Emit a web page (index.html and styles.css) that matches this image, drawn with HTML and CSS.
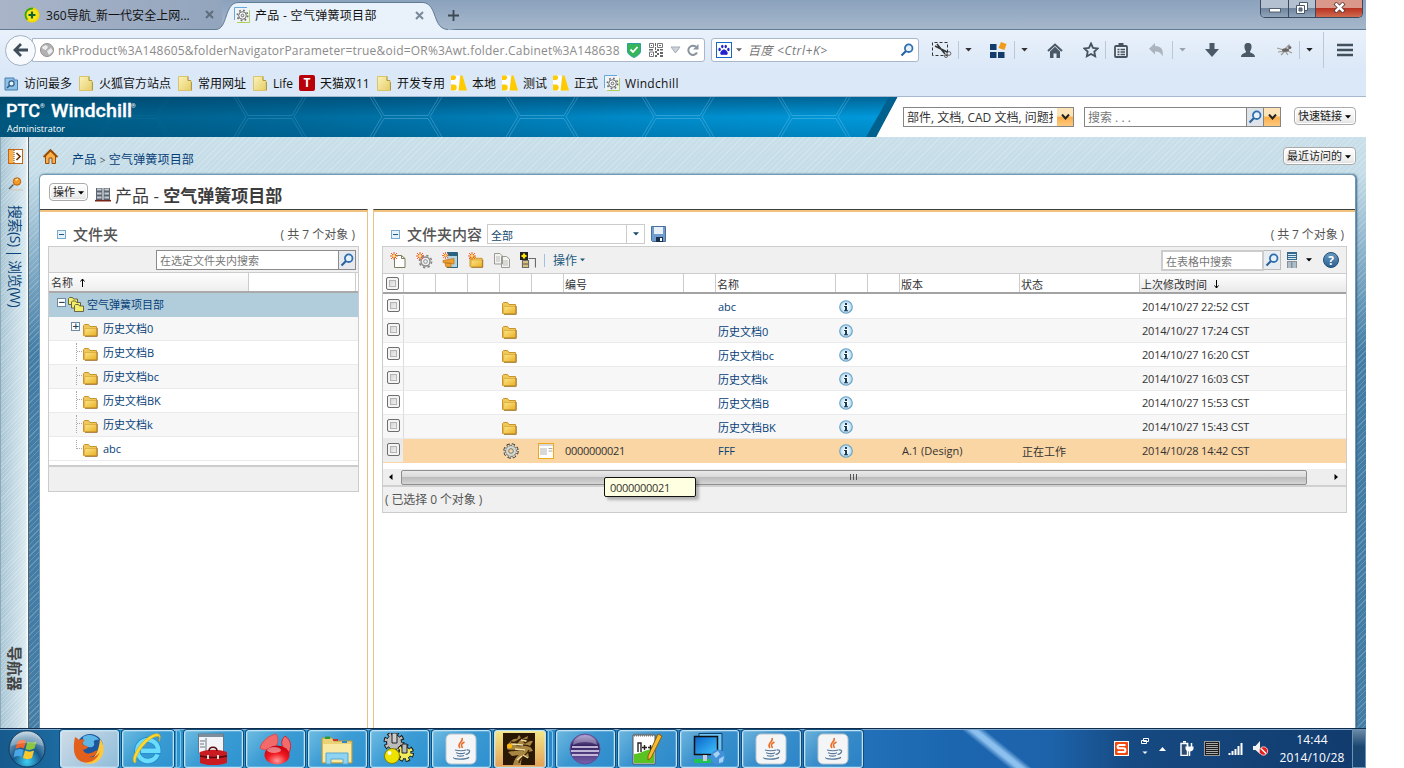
FILE: index.html
```html
<!DOCTYPE html>
<html lang="zh-CN">
<head>
<meta charset="utf-8">
<title>产品 - 空气弹簧项目部</title>
<link rel="stylesheet" href="styles.css">
</head>
<body>
<svg class="defs" width="0" height="0">
  <defs>
    <linearGradient id="gold" x1="0" y1="0" x2="1" y2="1"><stop offset="0" stop-color="#fde58c"/><stop offset="1" stop-color="#e8b020"/></linearGradient>
    <linearGradient id="pale" x1="0" y1="0" x2="1" y2="1"><stop offset="0" stop-color="#fbf3bb"/><stop offset="1" stop-color="#e6cd66"/></linearGradient>
    <radialGradient id="info"><stop offset="0.2" stop-color="#fff"/><stop offset="1" stop-color="#a8d4ee"/></radialGradient>
    <linearGradient id="help" x1="0" y1="0" x2="0" y2="1"><stop offset="0" stop-color="#6c9cc2"/><stop offset="1" stop-color="#2a5f92"/></linearGradient>
    <linearGradient id="banner" x1="0" y1="0" x2="1" y2="0"><stop offset="0" stop-color="#00587f"/><stop offset=".35" stop-color="#006c9e"/><stop offset=".7" stop-color="#008ac8"/><stop offset="1" stop-color="#009adc"/></linearGradient>
    <linearGradient id="shade" x1="0" y1="0" x2="0" y2="1"><stop offset="0" stop-color="#003c60" stop-opacity=".55"/><stop offset=".5" stop-color="#003c60" stop-opacity="0"/><stop offset="1" stop-color="#003c60" stop-opacity=".2"/></linearGradient>
    <radialGradient id="orb" cx=".5" cy=".85" r=".85"><stop offset="0" stop-color="#3fd0f5"/><stop offset=".45" stop-color="#17588c"/><stop offset=".8" stop-color="#6f9ab8"/><stop offset="1" stop-color="#c4d5e0"/></radialGradient>
    <radialGradient id="red" cx=".5" cy=".8" r=".8"><stop offset="0" stop-color="#ff9a9a"/><stop offset=".5" stop-color="#f01820"/><stop offset="1" stop-color="#c00010"/></radialGradient>
    <linearGradient id="purple" x1="0" y1="0" x2="0" y2="1"><stop offset="0" stop-color="#9a86c8"/><stop offset=".4" stop-color="#33215f"/><stop offset="1" stop-color="#7a62b0"/></linearGradient>
    <linearGradient id="scr" x1="0" y1="0" x2="1" y2="1"><stop offset="0" stop-color="#0a62c8"/><stop offset="1" stop-color="#3fc6ff"/></linearGradient>
  </defs>
  <symbol id="folder" viewBox="0 0 15 14"><path d="M.5 12.500V2.500L1.500 1.500h4L7 3.500h6.500V12.500Z" fill="#efc75a" stroke="#c8942c"/><path d="M2 5.500h11.800V12.800H1.200Z" fill="url(#gold)" stroke="#d9a634" stroke-width=".7"/><path d="M14.200 5v8.300H2" fill="none" stroke="#95641a" stroke-width=".9"/></symbol>
  <symbol id="bmfolder" viewBox="0 0 15 15"><path d="M.5.500h9.500v4h3v10h-12.500Z" fill="url(#pale)" stroke="#d9c36c"/><path d="M10 .5v4h3M13.500 6v8.500" fill="none" stroke="#b29a40"/></symbol>
  <symbol id="info-i" viewBox="0 0 14 14"><circle cx="7" cy="7" r="6.300" fill="url(#info)" stroke="#6aa0c2" stroke-width="1.100"/><path d="M6 3h2v2H6ZM5 6h3v4.300h1v1H5v-1h1V7H5Z" fill="#173c5c"/></symbol>
  <symbol id="gear" viewBox="0 0 16 16"><g fill="none" stroke="#888"><circle cx="8" cy="8" r="4.800" stroke-width="1.400"/><circle cx="8" cy="8" r="6.500" stroke-width="1.700" stroke-dasharray="2.550 2.550"/><circle cx="8" cy="8" r="2"/></g></symbol>
  <symbol id="wcgear" viewBox="0 0 16 16"><path d="M1 15V1h14v14Z" fill="#f2f3f5"/><path d="M.5 13V.5H13" fill="none" stroke="#62a9dd"/><path d="M15.500 3v12.500H3" fill="none" stroke="#a9d15a"/><g fill="none" stroke="#6b6b6b"><circle cx="8.500" cy="8.500" r="3.800"/><circle cx="8.500" cy="8.500" r="1.300"/><circle cx="8.500" cy="8.500" r="5.200" stroke-width="1.600" stroke-dasharray="1.700 2.380"/></g></symbol>
  <symbol id="lens" viewBox="0 0 14 14"><circle cx="8.700" cy="5.200" r="3.800" fill="#e6f1fa" stroke="#2f6fb0" stroke-width="1.800"/><path d="M6 8 1.500 12.500" stroke="#2d62a0" stroke-width="2.200"/></symbol>
  <symbol id="ba" viewBox="0 0 16 16"><path d="M0 .5h8.500v15H0Z" fill="#fff"/><path d="M7.500 15.500 9.500.5h2L16 15.500Z" fill="#ffcb00"/><path d="M0 .5h3.500c2 0 2.500 4-.5 4.500H0ZM0 9.500h3.500c3 .5 3 5.500 0 6H0Z" fill="#ffcb00"/></symbol>
  <symbol id="java" viewBox="0 0 32 32"><rect x="1" y="1" width="30" height="30" rx="5" fill="#f4f5f6" stroke="#b9c4cc"/><path d="M17 5c2 4-6 5-2 10M19.500 9c-4 2-3.500 3-2 6" fill="none" stroke="#e8702c" stroke-width="1.600"/><path d="M10 17c3 1 9 1 11 0M11 19.800c3 1 7 1 9 0M12 22.500c2 .8 5 .8 7 0M21.500 17c5-1 3.500 4-1 4.500M9 24.500c-2 1.800 12 2.500 15-.3" fill="none" stroke="#55789a" stroke-width="1.200"/></symbol>
  <symbol id="star" viewBox="0 0 8 8"><path d="M4 0v8M0 4h8M1 1l6 6M7 1 1 7" stroke="#ef5a28" stroke-width="1"/><circle cx="4" cy="4" r="1.400" fill="#ffe36a"/></symbol>
  <symbol id="caret" viewBox="0 0 8 5"><path d="M0 0h8L4 4.500Z"/></symbol>
</svg>

<div class="screen">
  <header class="titlebar">
    <div class="tab-back">
      <svg width="16" height="16" viewBox="0 0 16 16"><circle cx="8" cy="8" r="7.500" fill="#f5d800"/><path d="M.5 8a7.500 7.500 0 0 1 9-7.300L3 13.500A7.500 7.500 0 0 1 .5 8Z" fill="#35a51f"/><circle cx="8" cy="8" r="5.600" fill="#fbe51c"/><path d="M8 4.500v7M4.500 8h7" stroke="#12632a" stroke-width="2.200"/></svg>
      <span class="t1">360导航_新一代安全上网...</span>
      <svg class="x1" width="9" height="9" viewBox="0 0 9 9"><path d="M1 1l7 7M8 1 1 8" stroke="#5f6d7c" stroke-width="2"/></svg>
    </div>
    <div class="tab-front">
      <svg class="tabshape" width="234" height="30" viewBox="0 0 234 30"><path d="M-6 29.500C6 29 2 3 16 2.500H201C216 4 210 29 226 29.500L234 30H-6Z" fill="#e9f1fb"/><path d="M-6 29.500C6 29 2 3 16 2.500H201C216 4 210 29 226 29.500" fill="none" stroke="#607b94"/></svg>
      <svg width="16" height="16"><use href="#wcgear"/></svg>
      <span class="t2">产品 - 空气弹簧项目部</span>
      <svg class="x2" width="9" height="9" viewBox="0 0 9 9"><path d="M1 1l7 7M8 1 1 8" stroke="#7b8896" stroke-width="2"/></svg>
    </div>
    <svg class="plus" width="11" height="11" viewBox="0 0 11 11"><path d="M5.500 0v11M0 5.500h11" stroke="#3c4854" stroke-width="1.800"/></svg>
    <div class="winbtns">
      <span class="wb wmin"><svg width="12" height="5"><rect x=".5" y=".5" width="11" height="3.500" fill="#fff" stroke="#53606e"/></svg></span>
      <span class="wb wmax"><svg width="12" height="12" viewBox="0 0 12 12"><path d="M3.500.5h8v8h-8Z" fill="#fff" stroke="#4b586a"/><path d="M.5 3.500h8v8h-8Z" fill="#fff" stroke="#4b586a"/><path d="M3 6h3v3H3Z" fill="#6d7c92" stroke="#4b586a"/></svg></span>
      <span class="wb wclose"><svg width="13" height="11" viewBox="0 0 13 11"><path d="M2 1l9 9M11 1 2 10" stroke="#4c2b2b" stroke-width="4"/><path d="M2.500 1.500l8 8M10.500 1.500l-8 8" stroke="#fff" stroke-width="2.500"/></svg></span>
    </div>
  </header>

  <div class="navbar">
    <span class="back"><svg width="16" height="14" viewBox="0 0 16 14"><path d="M8 1 2 7l6 6M2.500 7H15" fill="none" stroke="#3f4d5b" stroke-width="2.800"/></svg></span>
    <div class="urlbar">
      <svg class="globe" width="14" height="14" viewBox="0 0 14 14"><circle cx="7" cy="7" r="6.500" fill="#b2b2b2" stroke="#929292"/><path d="M2 4l4-2 2 2-2 3-3-1ZM7 8l4-3 2 3-4 4Z" fill="#ededed"/></svg>
      <span class="url">nkProduct%3A148605&amp;folderNavigatorParameter=true&amp;oid=OR%3Awt.folder.Cabinet%3A148638</span>
      <svg width="14" height="15" viewBox="0 0 14 15"><path d="M.5.500h13V8c0 3-3 5-6.500 6.500C3.500 13 .5 11 .5 8Z" fill="#36b55c" stroke="#2da0a4"/><path d="M3.500 6.500 6 9l4.500-5" fill="none" stroke="#fff" stroke-width="1.800"/></svg>
      <svg class="qr" width="14" height="14" viewBox="0 0 14 14"><path d="M.5.5h4v4h-4ZM8.500.5h5v4h-5ZM.5 9h4v4.500h-4Z" fill="none" stroke="#777"/><path d="M2 2h1v1H2ZM10 2h2v1h-2ZM2 11h1v1H2ZM6 0h1v3H6ZM6 4h1v3H6ZM0 6h4v1.500H0ZM8 6h2v2H8ZM11 6h3v1.500h-3ZM6 8h2v2H6ZM8 10h2v2H8ZM11 9h3v2h-3ZM6 12h2v2H6ZM11 12h3v2h-3Z" fill="#666"/></svg>
      <svg class="tri" width="11" height="8" viewBox="0 0 11 8"><path d="M1 1h9L5.500 7Z" fill="#ccd2da" stroke="#a6adb6"/></svg>
      <svg width="12" height="12" viewBox="0 0 12 12"><path d="M10 8.500A4.600 4.600 0 1 1 9 2.800" fill="none" stroke="#8994a0" stroke-width="2"/><path d="M11.500 0v5.500H6Z" fill="#8994a0"/></svg>
    </div>
    <div class="searchbar">
      <svg width="16" height="16" viewBox="0 0 16 16"><rect x=".5" y=".5" width="15" height="15" fill="#fff" stroke="#1668c0"/><path d="M8 7.500c2 0 4 2.500 3.700 4.300-.5 1.700-2 1-3.700 1s-3.200.7-3.700-1C4 10 6 7.500 8 7.500Z" fill="#2222cf"/><ellipse cx="3.600" cy="7.500" rx="1.200" ry="1.700" fill="#2222cf"/><ellipse cx="12.400" cy="7.500" rx="1.200" ry="1.700" fill="#2222cf"/><ellipse cx="6.300" cy="4.500" rx="1.200" ry="1.800" fill="#2222cf"/><ellipse cx="9.700" cy="4.500" rx="1.200" ry="1.800" fill="#2222cf"/></svg>
      <svg class="c1" width="6" height="4"><use href="#caret" fill="#666"/></svg>
      <span class="hint">百度 &lt;Ctrl+K&gt;</span>
      <svg width="14" height="14"><use href="#lens"/></svg>
    </div>
    <div class="tools">
      <svg width="20" height="16" viewBox="0 0 20 16"><path d="M.5 13.500V.5h15v13Z" fill="none" stroke="#333" stroke-dasharray="3 2"/><path d="M3 4l13 6.500M5 2l8 10" stroke="#333" stroke-width="1.500"/><circle cx="17" cy="11.500" r="1.900" fill="none" stroke="#666"/><circle cx="14" cy="14" r="1.500" fill="none" stroke="#666"/></svg>
      <i class="sep s1"></i><svg class="dd" width="7" height="4"><use href="#caret" fill="#333"/></svg>
      <svg class="tiles" width="17" height="16" viewBox="0 0 17 16"><path d="M0 2h6.500v6H0ZM0 10h6.500v6H0ZM8 10h6.500v6H8Z" fill="#123a6b"/><path d="M11 0l5.500 2-2 6-6-2Z" fill="#f39a16"/></svg>
      <i class="sep s2"></i><svg class="dd" width="7" height="4"><use href="#caret" fill="#333"/></svg>
      <svg class="home" width="16" height="15" viewBox="0 0 16 15"><path d="M1 8 8 1.500 15 8" fill="none" stroke="#4b5866" stroke-width="2"/><path d="M3 8.500l5-4.700 5 4.700V15H9.500v-4.500h-3V15H3Z" fill="#4b5866"/></svg>
      <svg class="fav" width="16" height="16" viewBox="0 0 16 16"><path d="M8 1.500l2 4.300 4.700.6-3.400 3.200.9 4.700L8 12l-4.200 2.300.9-4.700L1.300 6.400 6 5.800Z" fill="none" stroke="#45525f" stroke-width="1.800"/></svg>
      <i class="sep s3"></i>
      <svg class="clip" width="14" height="15" viewBox="0 0 14 15"><rect x="1" y="3" width="12" height="11" rx="1" fill="#e8eff7" stroke="#45525f" stroke-width="1.800"/><path d="M4.500 0h5v3h-5Z" fill="#45525f"/><path d="M3.500 6.500h2M6.500 6.500h4.500M3.500 9h2M6.500 9h4.500M3.500 11.500h2M6.500 11.500h4.500" stroke="#45525f" stroke-width="1.300"/></svg>
      <svg class="undo" width="15" height="14" viewBox="0 0 15 14"><path d="M6 0v3c6 0 9 4 7.500 10.500C12 9.500 9.500 8.500 6 8.500v3L0 5.800Z" fill="#abb3be"/></svg>
      <i class="sep s4"></i><svg class="dd4" width="7" height="4"><use href="#caret" fill="#98a3ae"/></svg>
      <svg class="down" width="14" height="14" viewBox="0 0 14 14"><path d="M4.500 0h5v6H14l-7 8-7-8h4.500Z" fill="#4b5866"/></svg>
      <svg class="user" width="14" height="14" viewBox="0 0 14 14"><path d="M7 0c3 0 3.800 2 3.500 4.500C10.200 7 9.500 7.500 9 8.500c0 2 5 1.500 5 5.500H0c0-4 5-3.500 5-5.500C4.500 7.500 3.800 7 3.500 4.500 3.200 2 4 0 7 0Z" fill="#4b5866"/></svg>
      <svg class="fly" width="16" height="12" viewBox="0 0 16 12"><path d="M0 4l7 2 5-5 1 3-4 3-8 1M4 11l4-4 3 4M9 6l6 3" fill="none" stroke="#9a9a98" stroke-width="1.200"/><ellipse cx="8.500" cy="6" rx="3.500" ry="1.800" fill="#6a655e"/><circle cx="12.800" cy="3.500" r="1.600" fill="#6b6b6b"/></svg>
      <i class="sep s5"></i><svg class="dd" width="7" height="4"><use href="#caret" fill="#222"/></svg>
      <i class="sep tall"></i>
      <svg class="menu" width="16" height="14"><path d="M0 2h16M0 7h16M0 12h16" stroke="#43515e" stroke-width="2.600"/></svg>
    </div>
  </div>

  <nav class="bookmarks">
    <span style="width:75px"><svg width="15" height="15" viewBox="0 0 15 15"><path d="M1 2h9v2h3.500v10H1Z" fill="#8fc0e6" stroke="#477fb0"/><circle cx="7.500" cy="7.500" r="2.600" fill="#e6f3fc" stroke="#2e5c88" stroke-width="1.200"/><path d="M5.500 9.500 3 12" stroke="#2e5c88" stroke-width="1.600"/></svg>访问最多</span>
    <span style="width:99px"><svg width="15" height="15"><use href="#bmfolder"/></svg>火狐官方站点</span>
    <span style="width:75px"><svg width="15" height="15"><use href="#bmfolder"/></svg>常用网址</span>
    <span style="width:46px"><svg width="15" height="15"><use href="#bmfolder"/></svg>Life</span>
    <span style="width:78px"><i class="tmall">T</i>天猫双11</span>
    <span style="width:74px"><svg width="15" height="15"><use href="#bmfolder"/></svg>开发专用</span>
    <span style="width:51px"><svg width="16" height="16"><use href="#ba"/></svg>本地</span>
    <span style="width:51px"><svg width="16" height="16"><use href="#ba"/></svg>测试</span>
    <span style="width:51px"><svg width="16" height="16"><use href="#ba"/></svg>正式</span>
    <span class="wc"><svg width="16" height="16"><use href="#wcgear"/></svg>Windchill</span>
  </nav>

  <div class="banner">
    <svg class="bannerart" width="900" height="40" viewBox="0 0 900 40">
      <path d="M0 0H897L876 40H0Z" fill="url(#banner)"/><path d="M0 0H897L876 40H0Z" fill="url(#shade)"/>
      <path d="M889 0h8.500L876 40H866Z" fill="#00618f"/>
      <g fill="none" stroke="#9adcff" stroke-opacity=".32" stroke-width=".9">
        <path id="hex" d="M370 0l12 19.500L370 40M373 0l11 18.500h44L439 0M373 40l11-18.500h44L439 40M442 0l-12 19.500L442 40"/>
        <use href="#hex" x="136"/><use href="#hex" x="272"/><use href="#hex" x="408"/><use href="#hex" x="-136" opacity=".6"/><use href="#hex" x="-272" opacity=".15"/>
      </g>
      <g fill="#fff" font-family="Roboto, sans-serif"><text x="6" y="20" font-size="19" font-weight="500" textLength="34" lengthAdjust="spacingAndGlyphs" stroke="#fff" stroke-width=".3">PTC</text><text x="40" y="11" font-size="6">®</text><text x="51" y="20" font-size="19" font-weight="500" textLength="81" lengthAdjust="spacingAndGlyphs" stroke="#fff" stroke-width=".3">Windchill</text><text x="131" y="11" font-size="6">®</text></g>
      <text class="admin" x="7" y="35" textLength="58">Administrator</text>
    </svg>
    <div class="combo types"><span>部件, 文档, CAD 文档, 问题报告</span><b class="arrow"><svg width="9" height="6" viewBox="0 0 9 6"><path d="M1 .5l3.500 4L8 .5" fill="none" stroke="#222" stroke-width="2"/></svg></b></div>
    <div class="combo find"><span>搜索 . . .</span><b class="lensbox"><svg width="14" height="14"><use href="#lens"/></svg></b><b class="arrow"><svg width="9" height="6" viewBox="0 0 9 6"><path d="M1 .5l3.500 4L8 .5" fill="none" stroke="#222" stroke-width="2"/></svg></b></div>
    <button class="btn quick">快速链接<svg width="6" height="4"><use href="#caret"/></svg></button>
  </div>

  <main class="stage">
    <aside class="rail">
      <svg class="expand" width="15" height="15" viewBox="0 0 15 15"><rect x=".5" y=".5" width="14" height="14" fill="#fff" stroke="#c26614"/><path d="M1 1h4.500v13H1Z" fill="#f9b04e"/><path d="M6 1v13" stroke="#7a3a00" stroke-dasharray="1 1"/><path d="M8.500 4l3.500 3.500L8.500 11" fill="none" stroke="#663300" stroke-width="1.600"/></svg>
      <svg class="pin" width="16" height="14" viewBox="0 0 16 14"><path d="M3 13h12" stroke="#d6c3b0"/><path d="M5.500 7.500 1 12" stroke="#58616a" stroke-width="1.500"/><circle cx="9" cy="4.500" r="3.700" fill="#f49a24" stroke="#bd6008"/><path d="M7.500 3l2.500-.8" stroke="#ffe0a0" stroke-width="1.500"/></svg>
      <span class="vlink">搜索(S) | 浏览(W)</span>
      <span class="vtitle">导航器</span>
    </aside>
    <section class="content">
      <div class="crumbs">
        <svg width="15" height="15" viewBox="0 0 15 15"><path d="M2.500 7V14.500h3.500V9h3v5.500h3.500V7L7.500 2Z" fill="#f9b04a" stroke="#9a4c08"/><path d="M.5 8 7.500 1l7 7" fill="none" stroke="#9a4c08" stroke-width="1.800"/></svg>
        <span class="trail">产品 <em>&gt;</em> 空气弹簧项目部</span>
        <button class="btn">最近访问的<svg width="6" height="4"><use href="#caret"/></svg></button>
      </div>
      <div class="card">
        <div class="cardhead">
          <button class="btn">操作<svg width="6" height="4"><use href="#caret"/></svg></button>
          <svg class="shelf" width="16" height="14" viewBox="0 0 16 14"><path d="M1 0h6.500v12H1ZM8.500 0H15v12H8.500Z" fill="#5b6470"/><path d="M2 1.500h4.500M2 5.500h4.500M2 9.500h4.500M9.500 1.500H14M9.500 5.500H14M9.500 9.500H14" stroke="#c3cad2" stroke-width="2"/><path d="M0 12.700h16" stroke="#7a2418" stroke-width="1.600"/></svg>
          <h1>产品 - <b>空气弹簧项目部</b></h1>
        </div>
        <div class="panes">
          <section class="pane left">
            <div class="panehead"><i class="mini"></i><h2>文件夹</h2><span class="count">( 共 7 个对象 )</span></div>
            <div class="tree">
              <div class="treebar"><div class="tsearch">在选定文件夹内搜索</div><b class="tlens"><svg width="14" height="14"><use href="#lens"/></svg></b></div>
              <div class="treecols"><span>名称<svg class="sort" width="5" height="9" viewBox="0 0 5 9"><path d="M2.500 1v8M.5 3.500 2.500 1l2 2.500" fill="none" stroke="#000"/></svg></span><span></span><span></span></div>
              <div class="trow root"><i class="box">−</i><svg class="stack" width="16" height="15" viewBox="0 0 16 15"><g fill="#f5ee6a" stroke="#5a5a3a" stroke-width=".9"><path d="M.5 7.500V1.500l1-1h3l1 1.500h4v5.500Z"/><path d="M3.500 11V5l1-1h3l1 1.500h4V11Z"/><path d="M6.500 14.500v-6l1-1h3l1 1.500h4v5.500Z"/></g></svg><span>空气弹簧项目部</span></div>
              <div class="trow alt"><i class="box kid">+</i><svg width="15" height="14"><use href="#folder"/></svg><span>历史文档0</span></div>
              <div class="trow"><i class="dots"></i><svg width="15" height="14"><use href="#folder"/></svg><span>历史文档B</span></div>
              <div class="trow alt"><i class="dots"></i><svg width="15" height="14"><use href="#folder"/></svg><span>历史文档bc</span></div>
              <div class="trow"><i class="dots"></i><svg width="15" height="14"><use href="#folder"/></svg><span>历史文档BK</span></div>
              <div class="trow alt"><i class="dots"></i><svg width="15" height="14"><use href="#folder"/></svg><span>历史文档k</span></div>
              <div class="trow"><i class="dots last"></i><svg width="15" height="14"><use href="#folder"/></svg><span>abc</span></div>
              <div class="treefoot"></div>
            </div>
          </section>
          <section class="pane right">
            <div class="panehead"><i class="mini"></i><h2>文件夹内容</h2>
              <div class="view"><span>全部</span><b><svg width="6" height="4"><use href="#caret" fill="#1c4a66"/></svg></b></div>
              <svg width="15" height="16" viewBox="0 0 15 16"><path d="M.5.5h14v15H1.500l-1-1Z" fill="#6f9ccc" stroke="#4a6f9c"/><path d="M3 1h9v7H3Z" fill="#e9f1f8"/><path d="M5 11h7v5H5Z" fill="#18304f"/><path d="M9 12h2v3H9Z" fill="#fff"/></svg>
              <span class="count">( 共 7 个对象 )</span></div>
            <div class="grid">
              <div class="gbar">
                <svg class="a1" width="16" height="16" viewBox="0 0 16 16"><path d="M4.500 3.500h7l3.500 3V15.500H4.500Z" fill="#fff" stroke="#7c7f55"/><path d="M11.500 3.500v3H15" fill="none" stroke="#7c7f55"/><use href="#star" width="8" height="8"/></svg>
                <svg class="a2" width="17" height="17" viewBox="0 0 17 17"><use href="#gear" x="2" y="2" width="15" height="15"/><use href="#star" width="8" height="8"/></svg>
                <svg class="a3" width="16" height="16" viewBox="0 0 16 16"><path d="M5 .5h10.500v15H5" fill="#b5d2e0" stroke="#28627f"/><path d="M6 1h9v3H6Z" fill="#28627f"/><path d="M1 8.500l11-2v5.500L1 10.500ZM3 11h6v4H4Z" fill="#f0a030" stroke="#c07a20" stroke-width=".8"/><use href="#star" width="7" height="7"/></svg>
                <svg class="a4" width="16" height="16" viewBox="0 0 16 16"><use href="#folder" x="1" y="3" width="15" height="13"/><use href="#star" width="8" height="8"/></svg>
                <svg class="a5" width="16" height="15" viewBox="0 0 16 15"><path d="M.5.500h5.500l2.500 2.500v8H.5ZM7.500 3.500h5l3 2.500v8.500h-8Z" fill="#f4f4f0" stroke="#9a9a92"/><path d="M2 4h4M2 6h4M2 8h4M9 8h5M9 10h5M9 12h5" stroke="#bbb"/></svg>
                <svg class="a6" width="16" height="16" viewBox="0 0 16 16"><path d="M0 0h8v8H0Z" fill="#222"/><path d="M4 1.500v5M1.500 4h5" stroke="#ffe700" stroke-width="2.200"/><path d="M8.500 6.500h7v9M2.500 8.500h6v7h-6Z" fill="none" stroke="#6b6b6b" stroke-width="1.200"/><path d="M3 9h5v6H3Z" fill="#d9c07a"/><path d="M3 12h5" stroke="#555"/></svg>
                <i class="bar"></i><span class="act">操作</span><svg class="actdd" width="5" height="4"><use href="#caret" fill="#1c5a7c"/></svg>
                <div class="gsearch">在表格中搜索</div><b class="glens"><svg width="14" height="14"><use href="#lens"/></svg></b>
                <svg class="layout" width="10" height="16" viewBox="0 0 10 16"><path d="M0 0h10v8H0Z" fill="#35698d"/><path d="M1 2.500h8M1 4.500h8M1 6.500h8" stroke="#d8ecf7"/><path d="M0 9h10v7H0Z" fill="#8a8f9a"/><path d="M1 11h3M5.500 11H9M1 13h3M5.500 13H9M1 15h3M5.500 15H9" stroke="#cdeefa"/></svg>
                <svg class="ldd" width="6" height="4"><use href="#caret"/></svg>
                <svg width="16" height="16" viewBox="0 0 16 16"><circle cx="8" cy="8" r="7.500" fill="url(#help)" stroke="#244e77"/><text x="8" y="12.500" text-anchor="middle" fill="#fff" font-family="Open Sans" font-size="12" font-weight="700">?</text></svg>
              </div>
              <div class="gcols"><span><i class="check"></i></span><span></span><span></span><span></span><span></span><span></span><span>编号</span><span></span><span>名称</span><span></span><span></span><span>版本</span><span>状态</span><span class="sorted">上次修改时间<svg class="sort" width="5" height="9" viewBox="0 0 5 9"><path d="M2.500 0v8M.5 5.500l2 2.500 2-2.500" fill="none" stroke="#000"/></svg></span></div>
              <div class="grow"><i class="check"></i><svg class="ci" width="15" height="14"><use href="#folder"/></svg><span class="cn">abc</span><svg class="cf" width="14" height="14"><use href="#info-i"/></svg><span class="cd">2014/10/27 22:52 CST</span></div>
              <div class="grow alt"><i class="check"></i><svg class="ci" width="15" height="14"><use href="#folder"/></svg><span class="cn">历史文档0</span><svg class="cf" width="14" height="14"><use href="#info-i"/></svg><span class="cd">2014/10/27 17:24 CST</span></div>
              <div class="grow"><i class="check"></i><svg class="ci" width="15" height="14"><use href="#folder"/></svg><span class="cn">历史文档bc</span><svg class="cf" width="14" height="14"><use href="#info-i"/></svg><span class="cd">2014/10/27 16:20 CST</span></div>
              <div class="grow alt"><i class="check"></i><svg class="ci" width="15" height="14"><use href="#folder"/></svg><span class="cn">历史文档k</span><svg class="cf" width="14" height="14"><use href="#info-i"/></svg><span class="cd">2014/10/27 16:03 CST</span></div>
              <div class="grow"><i class="check"></i><svg class="ci" width="15" height="14"><use href="#folder"/></svg><span class="cn">历史文档B</span><svg class="cf" width="14" height="14"><use href="#info-i"/></svg><span class="cd">2014/10/27 15:53 CST</span></div>
              <div class="grow alt"><i class="check"></i><svg class="ci" width="15" height="14"><use href="#folder"/></svg><span class="cn">历史文档BK</span><svg class="cf" width="14" height="14"><use href="#info-i"/></svg><span class="cd">2014/10/27 15:43 CST</span></div>
              <div class="grow hot"><i class="check"></i>
                <svg class="ci part" width="16" height="16" viewBox="0 0 16 16"><circle cx="8" cy="8" r="6.300" fill="none" stroke="#333" stroke-width="2.800" stroke-dasharray="2.900 2.050"/><circle cx="8" cy="8" r="5.500" fill="#d5d9cc" stroke="#555" stroke-width=".7"/><circle cx="8" cy="8" r="6" fill="none" stroke="#d5d9cc" stroke-width="1.700" stroke-dasharray="1.900 2.810" stroke-dashoffset="-.4"/><circle cx="8" cy="8" r="2.300" fill="#fad6a4" stroke="#777"/></svg>
                <svg class="cm" width="16" height="16" viewBox="0 0 16 16"><rect x=".5" y=".5" width="15" height="15" fill="#fff" stroke="#f0a818"/><path d="M1 1h14v2H1Z" fill="#d5d9de"/><path d="M2 5h7v7H2Z" fill="#d8d8d8"/><path d="M10.500 5.500h4M10.500 8h4" stroke="#aaa"/></svg>
                <span class="cnum">0000000021</span><span class="cn">FFF</span><svg class="cf" width="14" height="14"><use href="#info-i"/></svg><span class="cv">A.1 (Design)</span><span class="cs">正在工作</span><span class="cd">2014/10/28 14:42 CST</span></div>
              <div class="hscroll"><svg width="5" height="8"><path d="M4.500 1v6L1 4Z"/></svg><div class="thumb"><svg width="8" height="6"><path d="M.5 0v6M3.500 0v6M6.500 0v6" stroke="#555"/></svg></div><svg class="endarrow" width="5" height="8"><path d="M.5 1v6L4 4Z"/></svg></div>
              <div class="gfoot">( 已选择 0 个对象 )</div>
              <div class="tooltip">0000000021</div>
            </div>
          </section>
        </div>
      </div>
    </section>
  </main>

  <footer class="taskbar">
    <div class="start"><svg width="40" height="38" viewBox="0 0 40 38"><circle cx="20" cy="19" r="18" fill="url(#orb)" stroke="#12395c"/><path d="M10.500 11.500c4-2.500 6-2 8.500-.5l-2 7.500c-3-1.500-5-1.500-8.500.5Z" fill="#f0642c"/><path d="M20.500 11.500c3 1.500 6 1.500 9-.5l-2 7.500c-3 1.500-6 2-9 .5Z" fill="#8cc540"/><path d="M8 20.500c4-2 6-2 8.500-.5l-2 7c-3-1.500-5-1.500-8 .5Z" fill="#4aa6e6"/><path d="M18 20.500c3 1.500 6 1.500 9 0l-2 7.500c-3 1.500-6 1.500-9 0Z" fill="#fbc82c"/><path d="M4 16a16 15 0 0 1 32 0c-10-4-22-4-32 0Z" fill="#fff" opacity=".25"/></svg></div>
    <div class="task on"><svg width="32" height="32" viewBox="0 0 32 32"><circle cx="17" cy="14" r="13" fill="#1b579f"/><path d="M10 4c6-4 14-1 16 3-4-1-6 1-5 3 1 3-2 5-5 4-4 0-5-2-6-3Z" fill="#5cb6e6"/><path d="M27 6c5 6 5 16-1 21-5 5-12 4-15 3 9-2 15-10 16-24Z" fill="#ffc83c"/><path d="M2 4c2 1 3 2 4 3 2-1 4-1 6 0-2 2-3 3-2 5 2 1 4 0 5 2-2 3-4 2-5 3 2 5 8 4 12 1 2 0 2-1 3-2-1 5-4 8-9 8 4 1 8-1 11-5-3 8-10 12-17 10C2 27-1 19 2 4Z" fill="#e2601b"/></svg></div>
    <div class="task ie"><svg width="32" height="32" viewBox="0 0 32 32"><path d="M26.500 21.500A10.500 10.500 0 1 1 27.300 17.800H10" fill="none" stroke="#1f8fd0" stroke-width="6"/><path d="M26.500 21.500A10.500 10.500 0 1 1 27.300 17.800H10" fill="none" stroke="#6bdcfb" stroke-width="4.400"/><path d="M4 30C-3 27 12 3 25 .8c5-.8 5 4 3 7.700 1.500-5 0-6-3-5C15 6 3 24 5 29Z" fill="#ffd92e" stroke="#e0a810" stroke-width=".6"/></svg></div><i class="pile"></i>
    <div class="task"><svg width="32" height="32" viewBox="0 0 32 32"><path d="M1.500 1h25v19h-25Z" fill="#f2f4f7" stroke="#697886"/><path d="M2 1h24v3H2Z" fill="#7e8d9c"/><path d="M3 8h5M3 11h4M3 14h5M9 5v14" stroke="#6a7680"/><path d="M3 19c8-3 18-3 27 0v11c-9 3-19 3-27 0Z" fill="#c91b20"/><path d="M3 23c9 2 18 2 27 0M12 18c0-5 8-5 8 0" fill="none" stroke="#5b0a0e" stroke-width="1.500"/><path d="M10 22h2v4h-2ZM20 22h2v4h-2Z" fill="#ddd"/></svg></div>
    <div class="task"><svg width="32" height="32" viewBox="0 0 32 32"><path d="M1 15C3 8 9 3 17 1c3 5 2 9 0 12-5 4-12 5-16 2Z" fill="#f26a6a" stroke="#e04a4a"/><path d="M23 12c-1-4 1-7 3-9 6 4 7 10 4 17-2-1-6-4-7-8Z" fill="#f36c6c" stroke="#d8232c"/><ellipse cx="18" cy="22" rx="12.500" ry="9.500" fill="url(#red)"/><ellipse cx="15" cy="17" rx="7" ry="3" fill="#fff" opacity=".45"/></svg></div>
    <div class="task"><svg width="32" height="32" viewBox="0 0 32 32"><path d="M1 5h10l2 3h18v22H1Z" fill="#ecd277" stroke="#b99a38"/><path d="M4 3.500h5v2.500H4Z" fill="#2f9a3a"/><path d="M12 6h5v2h-5Z" fill="#c33"/><path d="M21 8h5v2h-5Z" fill="#2a8acb"/><path d="M2 11h28v18H2Z" fill="#f8e9a4"/><path d="M5 31V20h22v11h-5v-5H10v5Z" fill="#8cd4f2" stroke="#5aa9cf"/></svg></div>
    <div class="task"><svg width="32" height="32" viewBox="0 0 32 32"><circle cx="11" cy="9" r="8" fill="none" stroke="#111" stroke-width="5" stroke-dasharray="4 2.280"/><circle cx="11" cy="9" r="7.500" fill="#bcbcbc" stroke="#111" stroke-width="1"/><circle cx="11" cy="9" r="8" fill="none" stroke="#bcbcbc" stroke-width="3" stroke-dasharray="2.600 3.680" stroke-dashoffset="-.7"/><path d="M9 0h5v10H9Z" fill="#ccc" stroke="#222"/><circle cx="22" cy="20" r="6.500" fill="none" stroke="#111" stroke-width="5" stroke-dasharray="3.600 2.200"/><circle cx="22" cy="20" r="6" fill="#f2ec5c" stroke="#111"/><circle cx="22" cy="20" r="6.500" fill="none" stroke="#f2ec5c" stroke-width="3" stroke-dasharray="2.400 3.400" stroke-dashoffset="-.6"/><path d="M19 11h5v9h-5Z" fill="#bbb" stroke="#222"/><circle cx="9" cy="23" r="7.500" fill="#eee200" stroke="#8a8000"/><circle cx="6.500" cy="20" r="2" fill="#fff"/></svg></div>
    <div class="task"><svg width="32" height="32"><use href="#java"/></svg></div>
    <div class="task gold"><svg width="32" height="32" viewBox="0 0 32 32"><path d="M0 0h32v32H0Z" fill="#2a1704"/><path d="M4 12c3-2 5-7 10-6l2-4 3 4 6-3-1 5 6 0-3 5 3 5-5 1 1 6-4-2c-3 1-4 4-4 9h-8c1-5 3-8 6-10l-7 1-4-4 4-1-5-2Z" fill="#a98542"/><path d="M5 13c4-4 6-2 9-5 4-4 8 0 12-2M6 17c6 2 10-2 15 1M13 12c5 2 8-2 15 2M16 30c1-7 8-7 10-13M8 9l6 1 4-5 4 5 6-3" fill="none" stroke="#3a2206" stroke-width="1.300"/><path d="M8 11l12 1M12 16l10 1M20 22l5 3M18 7l5 1M14 27l5-4" stroke="#f1dfa4" stroke-width="1.400"/><circle cx="6.500" cy="13" r="2.500" fill="#ffb800"/></svg></div><i class="pile"></i>
    <div class="task"><svg width="32" height="32" viewBox="0 0 32 32"><circle cx="16" cy="16" r="15" fill="url(#purple)" stroke="#5f4d95"/><path d="M3 14h26M2 18h28M3 22h26" stroke="#e6e0f5" stroke-width="1.500"/><path d="M4 12a12 10 0 0 1 24 0c-7-4-17-4-24 0Z" fill="#fff" opacity=".3"/></svg></div>
    <div class="task"><svg width="32" height="32" viewBox="0 0 32 32"><path d="M2 2h22v29H2Z" fill="#fff" stroke="#555"/><path d="M3 21c6 0 12-5 20-5v14H3Z" fill="#58c322"/><path d="M3 2h20" stroke="#777" stroke-width="3" stroke-dasharray="1 1"/><path d="M7 19v-9h3v9M13.500 12v5M11 14.500h5M19.500 12v5M17 14.500h5" fill="none" stroke="#222" stroke-width="1.400"/><path d="M27 1l4 2-11 22-3 2v-4Z" fill="#f5bc30" stroke="#8a5a10"/></svg></div>
    <div class="task"><svg width="32" height="32" viewBox="0 0 32 32"><path d="M6 .5h23v17H6Z" fill="#6dc4f5" stroke="#12406e"/><path d="M1.500 3.500h23v18h-23Z" fill="url(#scr)" stroke="#111" stroke-width="1.500"/><path d="M1 28h17" stroke="#23c353" stroke-width="4"/><path d="M12 22v6" stroke="#ccd" stroke-width="4"/><circle cx="25" cy="24" r="7.500" fill="#4391d8"/><path d="M20 21l5-3 2 3-4 4ZM26 26l5-3-1 6-4 1Z" fill="#a5d2f5"/></svg></div>
    <div class="task"><svg width="32" height="32"><use href="#java"/></svg></div>
    <div class="task"><svg width="32" height="32"><use href="#java"/></svg></div>
    <div class="tray">
      <svg width="15" height="15" viewBox="0 0 15 15"><rect width="15" height="15" fill="#fff"/><rect x="1" y="1" width="13" height="13" rx="1" fill="#ef4a10"/><path d="M11.500 4H5.500C3 4 3 7.300 5.500 7.300h4c2.500 0 2.500 3.700 0 3.700h-6" fill="none" stroke="#fff" stroke-width="2"/></svg>
      <svg class="lang" width="8" height="17" viewBox="0 0 8 17"><path d="M2.500.5h5v3h-5ZM.5 2.500h5v3h-5Z" fill="#0f3c70" stroke="#fff"/><path d="M1.500 13.500h5L4 16Z" fill="#fff"/></svg>
      <svg class="up" width="7" height="4"><path d="M0 4h7L3.500 0Z" fill="#fff"/></svg>
      <svg class="plug" width="14" height="15" viewBox="0 0 14 15"><path d="M1 2.500h6.500v12H1ZM3 .8h3" fill="#2b4a70" stroke="#fff" stroke-width="1.400"/><path d="M5.500 5.500h8v2c0 2-2 3-4 3s-4-1-4-3Z" fill="#fff"/><path d="M7.500 2v4M11.500 2v4M9.500 10v5" stroke="#fff" stroke-width="1.500"/></svg>
      <svg class="grill" width="16" height="15" viewBox="0 0 16 15"><rect x=".5" y=".5" width="15" height="14" fill="#1c1c1c" stroke="#999"/><path d="M2 2.500h12M2 4.500h12M2 6.500h12M2 8.500h12M2 10.500h12M2 12.500h12" stroke="#aaa"/></svg>
      <svg class="signal" width="16" height="12"><path d="M1.500 12v-2M4.500 12V8M7.500 12V6M10.500 12V3M13.500 12V0" stroke="#fff" stroke-width="2"/></svg>
      <svg class="mute" width="16" height="15" viewBox="0 0 16 15"><path d="M0 5h2.500L7 0v13L2.500 9H0Z" fill="#f2f2f2"/><circle cx="10.500" cy="10" r="4.200" fill="#e42020" stroke="#f7b6b6"/><path d="M8 7.500l5 5" stroke="#fff" stroke-width="1.400"/></svg>
      <div class="clock"><span>14:44</span><span>2014/10/28</span></div>
      <i class="peek"></i>
    </div>
  </footer>
</div>
</body>
</html>
```
FILE: styles.css
```css
* { box-sizing: border-box; }
body { margin: 0; background: #fff; font-family: "Open Sans", "Noto Sans CJK SC", sans-serif; font-size: 11px; color: #333; }
svg { flex: none; display: block; }
i { font-style: normal; }
.defs { position: absolute; }
.screen { width: 1366px; height: 768px; display: flex; flex-direction: column; overflow: hidden; white-space: nowrap; }

/* browser title bar */
.titlebar { height: 30px; display: flex; background: linear-gradient(#8ba2bd, #a5b7cb); border-bottom: 1px solid #607b94; font-size: 12px; color: #111; }
.tab-back { width: 222px; padding-left: 24px; display: flex; align-items: center; height: 30px; background: linear-gradient(90deg, #a9b4c8, #92a5bd); border-bottom: 1px solid #607b94; }
.t1 { margin-left: 6px; width: 148px; letter-spacing: .03px; }
.x1 { margin-left: 11px; }
.tab-front { width: 220px; height: 30px; display: grid; grid-template-columns: 12px 16px 5px 160px 1fr; align-items: center; }
.tab-front > svg:nth-child(2) { grid-column: 2; grid-row: 1; }
.tabshape { grid-area: 1 / 1 / 2 / 6; overflow: visible; }
.t2 { grid-column: 4; grid-row: 1; letter-spacing: .3px; }
.x2 { grid-column: 5; grid-row: 1; }
.plus { margin: 10px 0 0 6px; }
.winbtns { margin-left: auto; margin-right: 3px; display: flex; width: 103px; height: 18px; border: 1px solid #3b4a5d; border-top: 0; border-radius: 0 0 5px 5px; overflow: hidden; }
.wb { display: flex; justify-content: center; align-items: center; background: linear-gradient(#b3c0d0 45%, #71859e 50%, #8fa3bb); border-right: 1px solid #3b4a5d; }
.wmin { width: 28px; padding-top: 4px; }
.wmax { width: 27px; padding-bottom: 2px; }
.wclose { flex: 1; padding-bottom: 2px; background: linear-gradient(#d99889 45%, #b93322 50%, #cf6b50); border: 0; }

/* navigation */
.navbar { height: 40px; padding-left: 5px; display: flex; align-items: center; background: linear-gradient(#e9f1fb, #dbe8f7); }
.back { width: 31px; height: 31px; border: 1px solid #a3b1c2; border-radius: 50%; background: #f7fafd; display: grid; place-items: center; z-index: 1; }
.urlbar { margin-left: -4px; width: 673px; height: 24px; background: #fff; border: 1px solid #a9b7ca; border-radius: 0 3px 3px 0; display: flex; align-items: center; padding-left: 7px; }
.url { margin: 0 5px 0 4px; width: 564px; color: #8b8b8b; font-size: 12px; letter-spacing: .2px; }
.qr { margin: 0 7px 0 8px; }
.tri { margin-right: 6px; }
.searchbar { margin-left: 6px; width: 208px; height: 24px; background: #fff; border: 1px solid #a9b7ca; border-radius: 3px; display: flex; align-items: center; padding-left: 4px; }
.c1 { margin: 0 6px 0 4px; }
.hint { width: 152px; color: #777; font-style: italic; font-size: 12px; letter-spacing: .6px; }
.tools { margin-left: 13px; height: 40px; display: flex; align-items: center; }
.sep { width: 1px; height: 18px; background: #bac7d6; }
.s1 { margin: 0 6px; }
.tiles { margin-left: 18px; }
.s2 { margin: 0 6px 0 7px; }
.home { margin-left: 19px; }
.fav { margin-left: 20px; }
.s3 { margin: 0 8px 0 6px; }
.undo { margin-left: 21px; }
.s4 { margin: 0 6px 0 8px; }
.down { margin-left: 19px; }
.user { margin-left: 22px; }
.fly { margin-left: 22px; }
.s5 { margin: 0 6px 0 6px; }
.tall { height: 36px; margin: 0 13px 0 10px; }

.bookmarks { height: 27px; padding-left: 4px; display: flex; align-items: center; background: #dbe8f7; border-bottom: 1px solid #a7b9ce; font-size: 12px; color: #111; }
.bookmarks span { display: flex; align-items: center; gap: 5px; flex: none; height: 26px; }
.bookmarks .wc { letter-spacing: .3px; }
.tmall { width: 16px; height: 16px; background: #b90008; border-radius: 2px; color: #fff; font: 700 12px/16px "Open Sans", sans-serif; text-align: center; }

/* application banner */
.banner { height: 40px; display: flex; align-items: center; background: #fff; }
.bannerart { width: 900px; }
.admin { font: 9px "Open Sans", sans-serif; fill: #fff; }
.combo { display: flex; height: 20px; border: 1px solid #858585; font-size: 12px; background: #fff; overflow: hidden; }
.combo span { flex: 1; min-width: 0; overflow: hidden; line-height: 19px; padding-left: 3px; }
.types { width: 171px; margin: 0 10px 0 3px; }
.types span { margin-right: 4px; }
.find { width: 197px; }
.find span { color: #777; }
.arrow { width: 16px; background: linear-gradient(#fde3b8 45%, #fbae4a 50%, #fdc97e); display: grid; place-items: center; }
.lensbox { width: 17px; background: #dfe3ea; display: grid; place-items: center; border-left: 1px solid #858585; }
.find .arrow { border-left: 1px solid #858585; width: 17px; }
.btn { height: 18px; padding: 0 4px 2px 3px; border: 1px solid #aaa; border-radius: 4px; background: linear-gradient(#fff, #ececec 80%, #ddd); font: 11px "Open Sans", "Noto Sans CJK SC", sans-serif; color: #222; display: flex; align-items: center; gap: 3px; box-shadow: inset 0 0 0 1px #fff; flex: none; }
.btn svg { margin-top: 3px; }
.quick { margin: 0 0 2px 13px; }

/* page body */
.stage { height: 591px; display: flex; }
.rail { width: 29px; padding-left: 7px; display: flex; flex-direction: column; align-items: flex-start; border-right: 1px solid #54626c; border-left: 1px solid #8ca9b8; background: repeating-linear-gradient(135deg, #ffffff38 0 1px, transparent 1px 3px), linear-gradient(90deg, #a9c6d5, #d8e8ef 90%, #fff); }
.expand { margin-top: 12px; }
.pin { margin-top: 13px; }
.vlink, .vtitle { writing-mode: vertical-rl; text-orientation: sideways; font-size: 14px; line-height: 16px; margin-left: -1px; }
.vlink { margin-top: 14px; height: 110px; color: #0b4478; letter-spacing: -.45px; }
.vtitle { margin-top: 331px; font-weight: 700; font-size: 15px; color: #444; }
.content { flex: 1; min-width: 0; padding: 0 10px; background: repeating-linear-gradient(135deg, #ffffff30 0 1px, transparent 1px 4px), linear-gradient(#c9dfe9 0, #c5dde8 35px, #437da6 215px); }
.crumbs { height: 37px; padding: 1px 0 0 4px; display: flex; align-items: center; font-size: 12px; color: #073f78; }
.trail { margin-left: 14px; padding-top: 5px; flex: 1; letter-spacing: .17px; }
.trail em { font-style: normal; font-size: 10px; color: #555; }
.card { height: 554px; background: #fff; border: 1px solid #6f99b4; border-bottom: 0; border-radius: 5px 5px 0 0; box-shadow: 1px 0 2px #3c6484; }
.cardhead { height: 34px; display: flex; align-items: center; padding-left: 9px; }
.shelf { margin: 6px 4px 0 7px; }
h1, h2 { margin: 0; font-weight: 400; }
h1 { font-size: 17px; color: #3c3c3c; padding-top: 7px; line-height: 24px; }
.cardhead .btn { padding: 0 3px 2px; }
.panes { display: flex; gap: 5px; height: 519px; }
.pane { border-top: 1px solid #3f3f3f; display: flex; flex-direction: column; }
.left { width: 328px; border-right: 1px solid #eac185; box-shadow: inset 0 2px #f1c27e; padding: 0 8px; }
.right { flex: 1; border-left: 1px solid #eac185; box-shadow: inset 0 2px #f1c27e; padding: 0 8px; }
.panehead { height: 36px; display: flex; align-items: center; padding: 12px 3px 0 9px; }
.mini { width: 9px; height: 9px; border: 1px solid #7aa9cc; background: linear-gradient(#24587c, #24587c) center / 5px 1px no-repeat #e4f2fb; }
h2 { margin-left: 7px; font-size: 15px; color: #555; font-weight: 500; line-height: 20px; }
.count { margin-left: auto; font-size: 12px; color: #555; }
.left .count { margin-right: 1px; }
.right .count { letter-spacing: -.1px; }
.tree { width: 311px; height: 246px; border: 1px solid #ccc; }
.treebar { height: 25px; display: flex; justify-content: flex-end; align-items: center; background: #f0f0f0; padding-right: 2px; }
.tsearch { width: 183px; height: 20px; border: 1px solid #8b8b8b; background: #fff; color: #777; line-height: 20px; padding-left: 3px; }
.tlens { width: 17px; height: 20px; border: 1px solid #8b8b8b; border-left: 0; background: #e6e9ee; display: grid; place-items: center; }
.treecols { height: 21px; display: grid; grid-template-columns: 200px 107px 2px; border-top: 1px solid #ccc; border-bottom: 2px solid #aaa; }
.treecols span { border-right: 1px solid #ccc; padding-left: 2px; display: flex; align-items: center; }
.treecols span:first-child { background: linear-gradient(#fdfdfd, #eee); }
.sort { margin: 0 0 0 7px; }
.trow { height: 24px; display: flex; align-items: center; border-bottom: 1px solid #eaeaea; color: #073f78; padding-bottom: 1px; }
.trow.alt, .grow.alt { background: #f7f7f7; }
.trow.root { background: #b1cddb; border-color: #b1cddb; }
.trow.root svg { margin: 0 3px 0 2px; }
.trow.root .box { margin-left: 8px; margin-bottom: 3px; }
.trow:not(.root) svg { margin: 3px 5px 0 0; }
.box { width: 9px; height: 9px; border: 1px solid #6e8ba5; background: #fff; font: 700 9px/7px "DejaVu Sans", sans-serif; color: #24455e; text-align: center; }
.box.kid { margin: 0 3px 4px 22px; }
.dots { margin-left: 27px; width: 7px; height: 18px; border-left: 1px dotted #aaa; background: repeating-linear-gradient(90deg, #aaa 0 1px, transparent 1px 2px) 0 8px / 100% 1px no-repeat; }
.dots.last { height: 9px; margin-bottom: 8px; background-position: 0 100%; }
.treefoot { margin-top: 4px; height: 26px; background: #f0f0f0; border-top: 2px solid #ccc; }

.view { margin-left: 5px; margin-right: 6px; width: 158px; height: 20px; border: 1px solid #ccc; display: flex; color: #17496b; }
.view span { flex: 1; padding-left: 3px; line-height: 22px; }
.view b { width: 18px; border-left: 1px solid #ccc; display: grid; place-items: center; }
.grid { width: 965px; border: 1px solid #ccc; position: relative; }
.gbar { height: 26px; background: #f0f0f0; display: flex; align-items: center; padding-left: 7px; }
.gbar .a2, .gbar .a3, .gbar .a4, .gbar .a5, .gbar .a6 { margin-left: 10px; }
.gbar .a3 { margin-left: 9px; }
.bar { width: 1px; height: 13px; background: #9cc3e6; margin-left: 8px; }
.act { font-size: 12px; color: #1c5a7c; margin-left: 8px; }
.actdd { margin-left: 3px; }
.gsearch { margin-left: auto; width: 103px; height: 21px; border: 2px solid #ccc; background: #fff; color: #777; line-height: 20px; padding-left: 3px; }
.glens { width: 17px; height: 20px; border: 1px solid #bbb; border-left: 0; display: grid; place-items: center; background: #e9ecf1; }
.layout { margin: 0 9px 0 6px; }
.ldd { margin-right: 11px; }
.gbar > svg:last-child { margin-right: 7px; }
.gcols, .grow { display: grid; grid-template-columns: 21px repeat(5, 32px) 120px 32px 120px 32px 32px 120px 120px 1fr; align-items: center; }
.gcols { height: 21px; border-top: 1px solid #ccc; border-bottom: 2px solid #a3a3a3; align-items: stretch; }
.gcols span { border-right: 1px solid #ccc; display: flex; align-items: center; padding: 2px 0 0 1px; }
.gcols span:last-child { border: 0; background: linear-gradient(#fefefe, #e9e9e9); }
.gcols span:first-child { padding: 0 0 0 3px; }
.gcols + .grow { margin-top: 1px; }
.check { width: 13px; height: 13px; border: 1px solid #6e6e6e; border-radius: 2px; background: linear-gradient(135deg, #c8c8c8, #fff); box-shadow: inset 0 0 0 2px #f4f4f4, inset 0 0 0 3px #b5b5b5; }
.grow { height: 24px; border-bottom: 1px solid #eaeaea; background: linear-gradient(#dcdcdc, #dcdcdc) 20px 0 / 1px 100% no-repeat; }
.grow .check { margin: 0 0 2px 4px; }
.grow.alt { background: linear-gradient(#dcdcdc, #dcdcdc) 20px 0 / 1px 100% no-repeat #f7f7f7; }
.grow.hot { background: linear-gradient(#e8e8e8, #eee) 0 0 / 20px 100% no-repeat #fad6a4; border-color: #fad6a4; }
.ci { grid-column: 5; margin: 3px 0 0 2px; }
.ci.part { margin: 0 0 0 3px; }
.cm { grid-column: 6; margin-left: 6px; }
.cnum { grid-column: 7; margin-left: 1px; letter-spacing: -.3px; }
.cn { grid-column: 9; margin-left: 2px; color: #073f78; }
.cf { grid-column: 10; margin-left: 3px; }
.cv { grid-column: 12; margin-left: 2px; }
.cs { grid-column: 13; margin-left: 2px; }
.cd { grid-column: 14; margin-left: 2px; letter-spacing: -.2px; }
.hscroll { margin-top: 6px; height: 16px; display: flex; align-items: center; gap: 8px; padding: 0 7px 0 5px; background: #eee; }
.thumb { width: 906px; height: 15px; border: 1px solid #8f8f8f; border-radius: 2px; background: linear-gradient(#eaeaea, #d9d9d9 45%, #bcbcbc 50%, #d5d5d5); display: grid; place-items: center; }
.endarrow { margin-left: auto; }
.gfoot { height: 27px; border-top: 2px solid #d0d0d0; background: #f0f0f0; padding-left: 2px; line-height: 26px; font-size: 12px; color: #555; letter-spacing: -.1px; }
.tooltip { position: absolute; left: 221px; top: 230px; width: 92px; height: 20px; border: 1px solid #111; border-radius: 2px; background: #ffffe1; line-height: 20px; padding-left: 5px; letter-spacing: -.3px; box-shadow: 3px 3px 3px #0004; }

/* desktop taskbar */
.taskbar { height: 40px; display: flex; border-top: 1px solid #102c4a; box-shadow: inset 0 1px #7fa9cf; background: linear-gradient(39deg, #8cc0ee00 42%, #8cc0ee 48%, #8cc0ee 52%, #8cc0ee00 58%) 947px 0 / 100px 40px no-repeat, linear-gradient(90deg, #175a8d 0, #1c6aa0 58px, #2795d0 120px, #2b96d4 400px, #2478bf 800px, #1c66b0 950px, #1d63ab 1050px, #164a82 1130px, #113a6c 1366px); }
.start { width: 60px; padding-left: 7px; display: flex; align-items: center; }
.task { width: 59px; height: 38px; margin: 1px 3px 0 0; border: 1px solid #bfe3f5; border-radius: 3px; box-shadow: inset 0 0 0 1px #ffffff30, 0 0 0 1px #124c7a; display: grid; place-items: center; background: linear-gradient(135deg, #90cfe9aa, #4da2d588 45%, #3191cf88); flex: none; }
.task > svg { margin-right: 2px; }
.task.on { background: linear-gradient(135deg, #cfdce6, #8fbcda); }
.task.ie { width: 52px; margin-right: 0; }
.task.gold { width: 52px; margin-right: 0; background: linear-gradient(#f3e788, #e2a057); }
.pile { width: 7px; margin: 1px 3px 0 0; border: solid #8ac2e2; border-width: 1px 1px 1px 0; border-radius: 0 3px 3px 0; background: linear-gradient(90deg, transparent 2px, #8ac2e2 2px 3px, transparent 3px); }
.tray { margin-left: auto; display: flex; align-items: center; color: #fff; }
.lang { margin-left: 12px; margin-bottom: 4px; }
.up { margin-left: 10px; }
.plug { margin-left: 14px; }
.grill { margin-left: 10px; }
.signal { margin-left: 8px; }
.mute { margin-left: 9px; }
.clock { width: 72px; margin-left: 7px; display: flex; flex-direction: column; align-items: center; font-size: 12px; line-height: 18px; letter-spacing: .15px; }
.peek { margin-left: 4px; width: 14px; height: 39px; border: 1px solid #6c93b5; background: linear-gradient(#6a89a6, #1b4670 45%, #174675); }
```
